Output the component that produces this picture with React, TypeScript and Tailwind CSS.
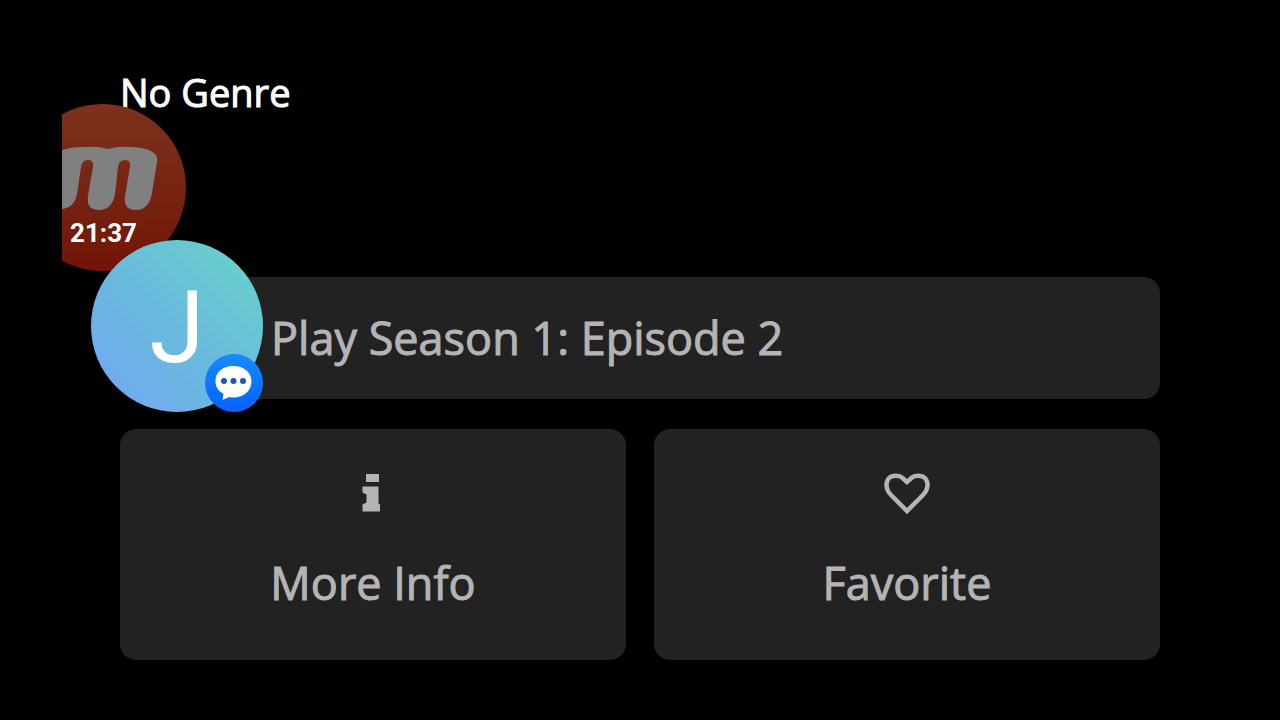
import type { ReactNode } from 'react';

function InfoIcon() {
  return (
    <svg viewBox="0 0 46 44" className="w-[46px] h-11" fill="currentColor" aria-hidden="true">
      <path d="M16 3h13v8h-13z" />
      <path d="M12.500 15.500h16v17l1.500 1v7h-17.500v-7l4-2v-8l-4-2z" />
    </svg>
  );
}

function HeartIcon() {
  return (
    <svg viewBox="0 0 46 44" className="w-[46px] h-11" fill="none" stroke="currentColor" strokeWidth="4.500" aria-hidden="true">
      <path d="M23 11L18 6.500C16 5 13.500 4.800 11.500 4.800C6 4.800 2.500 8.500 2.500 14C2.500 18.500 4.500 21.500 7.500 24.500L23 40L38.500 24.500C41.500 21.500 43.500 18.500 43.500 14C43.500 8.500 40 4.800 34.500 4.800C32.500 4.800 30 5 28 6.500Z" />
    </svg>
  );
}

function ActionCard({ icon, label }: { icon: ReactNode; label: string }) {
  return (
    <button
      type="button"
      className="flex flex-1 flex-col items-center gap-9 rounded-2xl bg-[#222222] pt-[42px] pb-[45px] text-[45px] leading-16 text-[#b4b4b4] [-webkit-text-stroke-width:1px]"
    >
      {icon}
      <span>{label}</span>
    </button>
  );
}

function RecorderBubble() {
  return (
    <div className="absolute left-[62px] top-[104px] h-[167px] w-[124px] overflow-hidden">
      <div className="absolute right-0 top-0 size-[167px] rounded-full bg-linear-to-b from-[#7c321d] to-[#721406]" />
      <svg viewBox="62 104 124 167" className="absolute inset-0 size-full" fill="#808080" aria-hidden="true">
        <path d="M58 152Q68 147 84 147Q98 146 108 149Q118 146 132 147Q150 148 155 154Q158 157 157 162L152 193Q149 210 136 210Q123 210 125 196L130 167Q131 160 125 160Q119 160 118 167L115 194Q112 210 99 210Q86 210 88 196L93 167Q94 160 88 160Q82 160 81 167L77 194Q74 209 60 209Z" />
      </svg>
      <span className="absolute bottom-5 left-2 font-[Roboto] text-[26px] leading-9 font-bold text-white">21:37</span>
    </div>
  );
}

function ChatBubble() {
  return (
    <button type="button" aria-label="Open chat with J" className="absolute left-[91px] top-[240px] size-[172px]">
      <span className="flex size-full items-center justify-center rounded-full bg-linear-to-bl from-[#68d3c5] via-[#69bbdd] to-[#73a5f4] pt-1 font-[Roboto] text-[100px] leading-none text-white">
        J
      </span>
      <span className="absolute right-0 bottom-0 size-[58px] rounded-full bg-linear-to-b from-[#198bfb] to-[#0862fb]">
        <svg viewBox="0 0 58 58" className="size-full" aria-hidden="true">
          <path fill="white" d="M28.500 12C18 12 10.500 18 10.500 27C10.500 33 13.500 37 18.500 40L17.500 46L24.500 43Q26.500 43.500 28.500 43.500C38.500 43.500 46.500 37 46.500 27.500C46.500 18 38.500 12 28.500 12Z" />
          <g fill="#2356a5">
            <circle cx="19" cy="27" r="3" />
            <circle cx="28.500" cy="27" r="3" />
            <circle cx="38" cy="27" r="3" />
          </g>
        </svg>
      </span>
    </button>
  );
}

export default function App() {
  return (
    <div className="relative min-h-screen bg-black font-['Open_Sans',sans-serif]">
      <main className="flex flex-col px-[120px] pt-16 pb-[60px]">
        <h1 className="text-[38px] leading-14 text-white [-webkit-text-stroke-width:1px]">No Genre</h1>

        <button
          type="button"
          className="mt-[157px] rounded-2xl bg-[#222222] py-[29px] pl-[151px] pr-8 text-left text-[45px] leading-16 text-[#b4b4b4] [-webkit-text-stroke-width:1px]"
        >
          Play Season 1: Episode 2
        </button>

        <div className="mt-[30px] flex gap-7">
          <ActionCard icon={<InfoIcon />} label="More Info" />
          <ActionCard icon={<HeartIcon />} label="Favorite" />
        </div>
      </main>

      <RecorderBubble />
      <ChatBubble />
    </div>
  );
}
